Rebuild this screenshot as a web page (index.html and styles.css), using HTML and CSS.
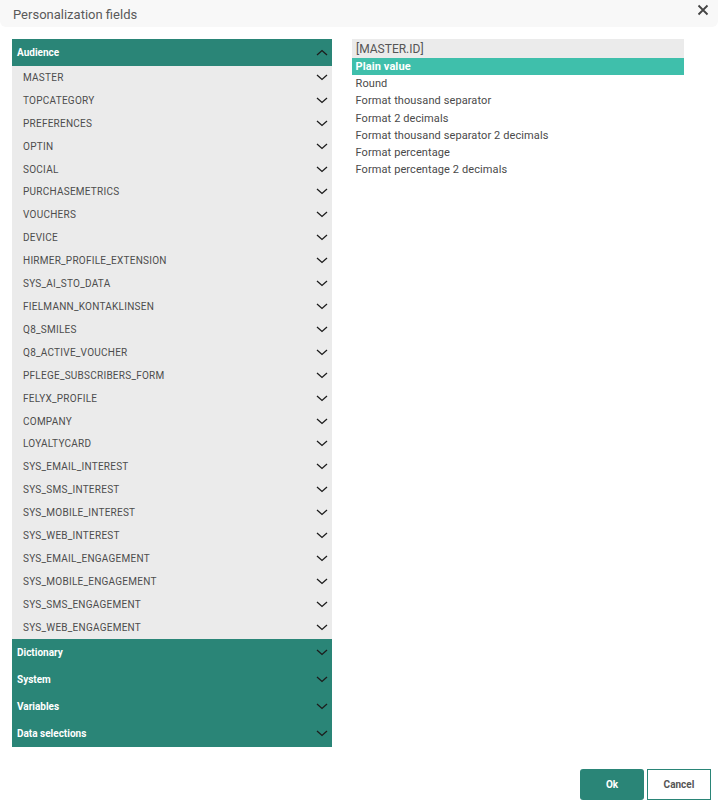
FILE: index.html
```html
<!DOCTYPE html>
<html>
<head>
<meta charset="utf-8">
<link rel="stylesheet" href="styles.css">
</head>
<body>
<div class="dialog">
  <div class="titlebar">
    <span class="title">Personalization fields</span>
    <span class="close"><svg width="12" height="12" viewBox="0 0 12 12"><path d="M1.5 1.5L10.5 10.5M10.5 1.5L1.5 10.5" stroke="#444" stroke-width="1.8" fill="none"/></svg></span>
  </div>
  <div class="main">
    <div class="tree">
      <div class="section open"><span>Audience</span><svg class="chev" width="12" height="7" viewBox="0 0 12 7"><path d="M1 6L6 1.5L11 6" stroke="#1c1c1c" stroke-width="1.3" fill="none"/></svg></div>
      <div class="items">
        <div class="item"><span>MASTER</span><svg class="chev" width="12" height="7" viewBox="0 0 12 7"><path d="M1 1L6 5.5L11 1" stroke="#1c1c1c" stroke-width="1.3" fill="none"/></svg></div>
        <div class="item"><span>TOPCATEGORY</span><svg class="chev" width="12" height="7" viewBox="0 0 12 7"><path d="M1 1L6 5.5L11 1" stroke="#1c1c1c" stroke-width="1.3" fill="none"/></svg></div>
        <div class="item"><span>PREFERENCES</span><svg class="chev" width="12" height="7" viewBox="0 0 12 7"><path d="M1 1L6 5.5L11 1" stroke="#1c1c1c" stroke-width="1.3" fill="none"/></svg></div>
        <div class="item"><span>OPTIN</span><svg class="chev" width="12" height="7" viewBox="0 0 12 7"><path d="M1 1L6 5.5L11 1" stroke="#1c1c1c" stroke-width="1.3" fill="none"/></svg></div>
        <div class="item"><span>SOCIAL</span><svg class="chev" width="12" height="7" viewBox="0 0 12 7"><path d="M1 1L6 5.5L11 1" stroke="#1c1c1c" stroke-width="1.3" fill="none"/></svg></div>
        <div class="item"><span>PURCHASEMETRICS</span><svg class="chev" width="12" height="7" viewBox="0 0 12 7"><path d="M1 1L6 5.5L11 1" stroke="#1c1c1c" stroke-width="1.3" fill="none"/></svg></div>
        <div class="item"><span>VOUCHERS</span><svg class="chev" width="12" height="7" viewBox="0 0 12 7"><path d="M1 1L6 5.5L11 1" stroke="#1c1c1c" stroke-width="1.3" fill="none"/></svg></div>
        <div class="item"><span>DEVICE</span><svg class="chev" width="12" height="7" viewBox="0 0 12 7"><path d="M1 1L6 5.5L11 1" stroke="#1c1c1c" stroke-width="1.3" fill="none"/></svg></div>
        <div class="item"><span>HIRMER_PROFILE_EXTENSION</span><svg class="chev" width="12" height="7" viewBox="0 0 12 7"><path d="M1 1L6 5.5L11 1" stroke="#1c1c1c" stroke-width="1.3" fill="none"/></svg></div>
        <div class="item"><span>SYS_AI_STO_DATA</span><svg class="chev" width="12" height="7" viewBox="0 0 12 7"><path d="M1 1L6 5.5L11 1" stroke="#1c1c1c" stroke-width="1.3" fill="none"/></svg></div>
        <div class="item"><span>FIELMANN_KONTAKLINSEN</span><svg class="chev" width="12" height="7" viewBox="0 0 12 7"><path d="M1 1L6 5.5L11 1" stroke="#1c1c1c" stroke-width="1.3" fill="none"/></svg></div>
        <div class="item"><span>Q8_SMILES</span><svg class="chev" width="12" height="7" viewBox="0 0 12 7"><path d="M1 1L6 5.5L11 1" stroke="#1c1c1c" stroke-width="1.3" fill="none"/></svg></div>
        <div class="item"><span>Q8_ACTIVE_VOUCHER</span><svg class="chev" width="12" height="7" viewBox="0 0 12 7"><path d="M1 1L6 5.5L11 1" stroke="#1c1c1c" stroke-width="1.3" fill="none"/></svg></div>
        <div class="item"><span>PFLEGE_SUBSCRIBERS_FORM</span><svg class="chev" width="12" height="7" viewBox="0 0 12 7"><path d="M1 1L6 5.5L11 1" stroke="#1c1c1c" stroke-width="1.3" fill="none"/></svg></div>
        <div class="item"><span>FELYX_PROFILE</span><svg class="chev" width="12" height="7" viewBox="0 0 12 7"><path d="M1 1L6 5.5L11 1" stroke="#1c1c1c" stroke-width="1.3" fill="none"/></svg></div>
        <div class="item"><span>COMPANY</span><svg class="chev" width="12" height="7" viewBox="0 0 12 7"><path d="M1 1L6 5.5L11 1" stroke="#1c1c1c" stroke-width="1.3" fill="none"/></svg></div>
        <div class="item"><span>LOYALTYCARD</span><svg class="chev" width="12" height="7" viewBox="0 0 12 7"><path d="M1 1L6 5.5L11 1" stroke="#1c1c1c" stroke-width="1.3" fill="none"/></svg></div>
        <div class="item"><span>SYS_EMAIL_INTEREST</span><svg class="chev" width="12" height="7" viewBox="0 0 12 7"><path d="M1 1L6 5.5L11 1" stroke="#1c1c1c" stroke-width="1.3" fill="none"/></svg></div>
        <div class="item"><span>SYS_SMS_INTEREST</span><svg class="chev" width="12" height="7" viewBox="0 0 12 7"><path d="M1 1L6 5.5L11 1" stroke="#1c1c1c" stroke-width="1.3" fill="none"/></svg></div>
        <div class="item"><span>SYS_MOBILE_INTEREST</span><svg class="chev" width="12" height="7" viewBox="0 0 12 7"><path d="M1 1L6 5.5L11 1" stroke="#1c1c1c" stroke-width="1.3" fill="none"/></svg></div>
        <div class="item"><span>SYS_WEB_INTEREST</span><svg class="chev" width="12" height="7" viewBox="0 0 12 7"><path d="M1 1L6 5.5L11 1" stroke="#1c1c1c" stroke-width="1.3" fill="none"/></svg></div>
        <div class="item"><span>SYS_EMAIL_ENGAGEMENT</span><svg class="chev" width="12" height="7" viewBox="0 0 12 7"><path d="M1 1L6 5.5L11 1" stroke="#1c1c1c" stroke-width="1.3" fill="none"/></svg></div>
        <div class="item"><span>SYS_MOBILE_ENGAGEMENT</span><svg class="chev" width="12" height="7" viewBox="0 0 12 7"><path d="M1 1L6 5.5L11 1" stroke="#1c1c1c" stroke-width="1.3" fill="none"/></svg></div>
        <div class="item"><span>SYS_SMS_ENGAGEMENT</span><svg class="chev" width="12" height="7" viewBox="0 0 12 7"><path d="M1 1L6 5.5L11 1" stroke="#1c1c1c" stroke-width="1.3" fill="none"/></svg></div>
        <div class="item"><span>SYS_WEB_ENGAGEMENT</span><svg class="chev" width="12" height="7" viewBox="0 0 12 7"><path d="M1 1L6 5.5L11 1" stroke="#1c1c1c" stroke-width="1.3" fill="none"/></svg></div>
      </div>
      <div class="section"><span>Dictionary</span><svg class="chev" width="12" height="7" viewBox="0 0 12 7"><path d="M1 1L6 5.5L11 1" stroke="#1c1c1c" stroke-width="1.3" fill="none"/></svg></div>
      <div class="section"><span>System</span><svg class="chev" width="12" height="7" viewBox="0 0 12 7"><path d="M1 1L6 5.5L11 1" stroke="#1c1c1c" stroke-width="1.3" fill="none"/></svg></div>
      <div class="section"><span>Variables</span><svg class="chev" width="12" height="7" viewBox="0 0 12 7"><path d="M1 1L6 5.5L11 1" stroke="#1c1c1c" stroke-width="1.3" fill="none"/></svg></div>
      <div class="section"><span>Data selections</span><svg class="chev" width="12" height="7" viewBox="0 0 12 7"><path d="M1 1L6 5.5L11 1" stroke="#1c1c1c" stroke-width="1.3" fill="none"/></svg></div>
    </div>
    <div class="formats">
      <div class="field">[MASTER.ID]</div>
      <div class="opt selected">Plain value</div>
      <div class="opt">Round</div>
      <div class="opt">Format thousand separator</div>
      <div class="opt">Format 2 decimals</div>
      <div class="opt">Format thousand separator 2 decimals</div>
      <div class="opt">Format percentage</div>
      <div class="opt">Format percentage 2 decimals</div>
    </div>
  </div>
  <div class="footer">
    <button class="btn ok">Ok</button>
    <button class="btn cancel">Cancel</button>
  </div>
</div>
</body>
</html>
```
FILE: styles.css
```css
* { box-sizing: border-box; }
html, body { margin: 0; padding: 0; background: #fff; }
body { font-family: Roboto, "Liberation Sans", sans-serif; width: 718px; height: 803px; }
.dialog { display: flex; flex-direction: column; height: 803px; }
.titlebar {
  height: 27px;
  background: #f8f8f8;
  border-radius: 0 0 6px 6px;
  display: flex;
  align-items: center;
  justify-content: space-between;
  padding: 1px 9px 0 13px;
}
.title { font-size: 13px; color: #5a5a5a; }
.close { display: flex; width: 12px; height: 12px; margin-top: -9px; }
.main {
  display: flex;
  gap: 20px;
  padding: 12px 0 0 12px;
  flex: 1;
  align-items: flex-start;
}
.tree { width: 320px; display: flex; flex-direction: column; }
.section {
  height: 27px;
  background: #2a8577;
  color: #fff;
  font-weight: 700;
  font-size: 10px;
  display: flex;
  align-items: center;
  justify-content: space-between;
  padding: 0 4px 0 5px;
}
.items { background: #ebebeb; display: flex; flex-direction: column; }
.item {
  height: 22.92px;
  display: flex;
  align-items: center;
  justify-content: space-between;
  padding: 0 4px 0 11px;
  font-size: 10px;
  color: #4d4d4d;
  letter-spacing: 0.25px;
}
.chev { display: block; }
.formats { width: 332px; display: flex; flex-direction: column; }
.field {
  height: 19px;
  background: #ebebeb;
  font-size: 12px;
  color: #555;
  padding: 0 4px;
  display: flex;
  align-items: center;
}
.opt {
  height: 17.2px;
  font-size: 11px;
  color: #4a4a4a;
  padding: 0 3px 0 3.5px;
  display: flex;
  align-items: center;
  letter-spacing: 0.1px;
}
.opt.selected { background: #3fbfab; color: #fff; font-weight: 700; }
.footer {
  display: flex;
  justify-content: flex-end;
  gap: 3px;
  padding: 0 7px 3px 0;
}
.btn {
  width: 64px;
  height: 31px;
  font-family: Roboto, "Liberation Sans", sans-serif;
  font-size: 10px;
  font-weight: 700;
  border-radius: 3px;
  cursor: pointer;
}
.btn.ok { background: #2a8577; color: #fff; border: none; }
.btn.cancel { background: #fff; color: #555; border: 1px solid #2a8577; border-radius: 0; }
```
